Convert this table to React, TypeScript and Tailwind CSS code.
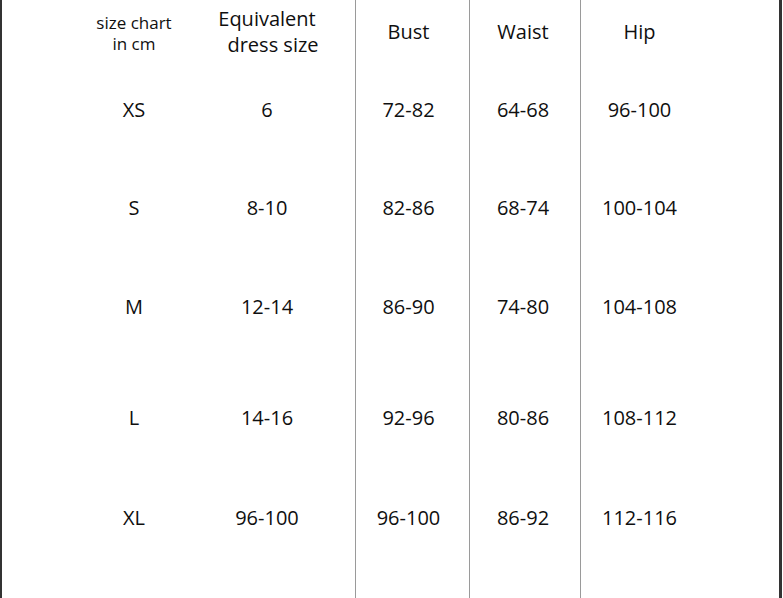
import React from "react";

// row heights chosen so each text line sits where the chart has it
const rowHeights = ["h-[64px]", "h-[92px]", "h-[104px]", "h-[94px]", "h-[128px]", "h-[72px]"];

const sizes = ["XS", "S", "M", "L", "XL"];
const dress = ["6", "8-10", "12-14", "14-16", "96-100"];
const bust = ["72-82", "82-86", "86-90", "92-96", "96-100"];
const waist = ["64-68", "68-74", "74-80", "80-86", "86-92"];
const hip = ["96-100", "100-104", "104-108", "108-112", "112-116"];

type ColProps = {
  head: React.ReactNode;
  values: string[];
  className: string;
  cellClass?: string;
};

function Column({ head, values, className, cellClass = "" }: ColProps) {
  return (
    <div className={`flex flex-col h-full ${className}`}>
      <div className={`${rowHeights[0]} flex items-center justify-center text-center ${cellClass}`}>{head}</div>
      {values.map((v, i) => (
        <div key={v + i} className={`${rowHeights[i + 1]} flex items-center justify-center ${cellClass}`}>
          {v}
        </div>
      ))}
    </div>
  );
}

export default function App() {
  return (
    <div
      className="w-[783px] h-[598px] bg-white text-[#0f0f0f] overflow-hidden"
      style={{ fontFamily: '"Open Sans", "Noto Sans", sans-serif' }}
    >
      <div className="flex h-full w-[782px] border-l-2 border-r-[3px] border-[#333] text-[20px] leading-[28px]">
        <Column
          className="w-[198px]"
          cellClass="pl-[66px]"
          head={
            <div className="text-[17px] leading-[21px] pt-px">
              size chart
              <br />
              in cm
            </div>
          }
          values={sizes}
        />
        <Column
          className="w-[155px]"
          cellClass="pr-[21px]"
          head={
            <div className="leading-[26px]">
              Equivalent
              <br />
              <span className="pl-3">dress size</span>
            </div>
          }
          values={dress}
        />
        <Column className="w-[114px] border-l border-[#9a9a9a]" cellClass="pr-2" head="Bust" values={bust} />
        <Column className="w-[111px] border-l border-[#9a9a9a]" cellClass="pr-1" head="Waist" values={waist} />
        <Column className="flex-1 border-l border-[#9a9a9a]" cellClass="pr-[81px]" head="Hip" values={hip} />
      </div>
    </div>
  );
}
